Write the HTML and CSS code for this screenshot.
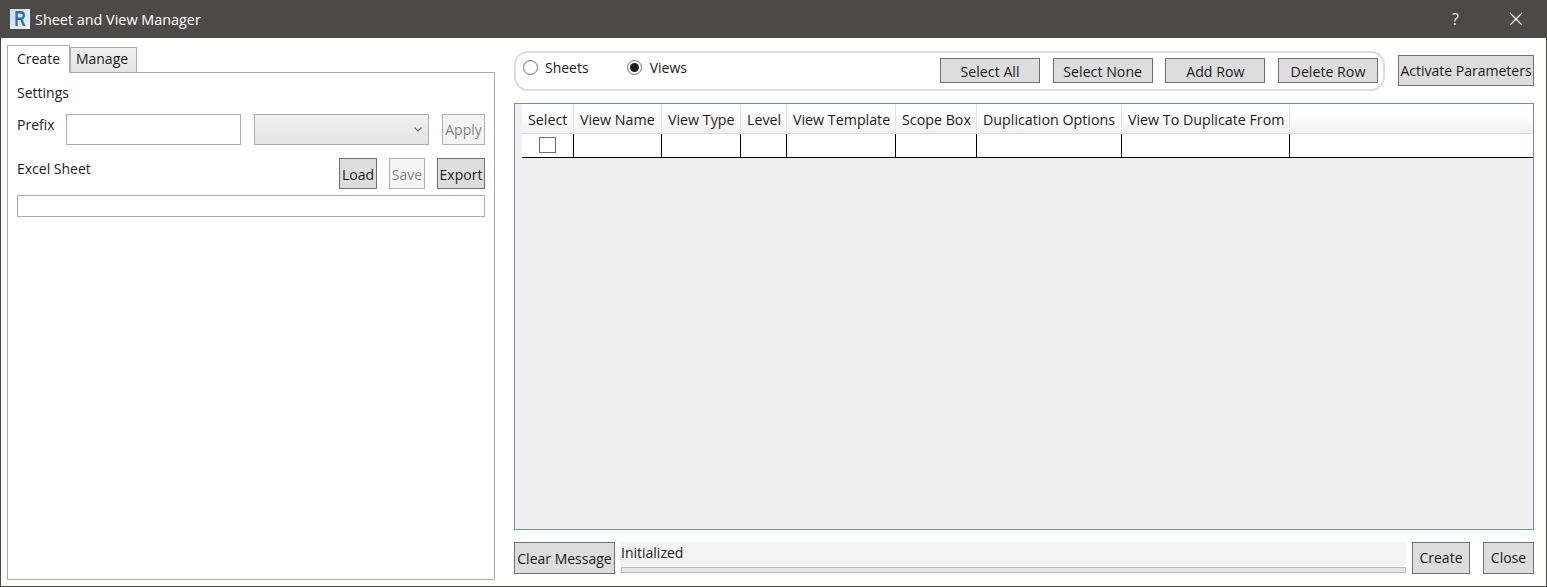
FILE: index.html
```html
<!DOCTYPE html>
<html lang="en">
<head>
<meta charset="utf-8">
<title>Sheet and View Manager</title>
<link rel="stylesheet" href="styles.css">
</head>
<body>
<div class="window">
  <header class="titlebar">
    <div class="logo"><span class="logo-r">R</span></div>
    <div class="title">Sheet and View Manager</div>
    <div class="help">?</div>
    <svg class="close-x" width="14" height="14" viewBox="0 0 14 14"><path d="M1 1 13 13M13 1 1 13" stroke="#fff" stroke-width="1.1" fill="none"/></svg>
  </header>
  <main class="content">
    <section class="left">
      <div class="tabs">
        <div class="tab active">Create</div>
        <div class="tab">Manage</div>
      </div>
      <div class="panel">
        <div class="settings">Settings</div>
        <div class="prefix-row">
          <span class="prefix-label">Prefix</span>
          <div class="input prefix-input"></div>
          <div class="combo">
            <svg width="8" height="5" viewBox="0 0 8 5"><path d="M.5.5 4 4 7.500.5" stroke="#666" stroke-width="1.200" fill="none"/></svg>
          </div>
          <button class="btn disabled apply">Apply</button>
        </div>
        <div class="excel-row">
          <span class="excel-label">Excel Sheet</span>
          <button class="btn small load">Load</button>
          <button class="btn small disabled save">Save</button>
          <button class="btn small export">Export</button>
        </div>
        <div class="input path-input"></div>
      </div>
    </section>
    <section class="right">
      <div class="top-row">
        <div class="group">
          <label class="radio"><span class="dot"></span>Sheets</label>
          <label class="radio views"><span class="dot on"></span>Views</label>
          <div class="group-btns">
            <button class="btn wide">Select All</button>
            <button class="btn wide">Select None</button>
            <button class="btn wide">Add Row</button>
            <button class="btn wide">Delete Row</button>
          </div>
        </div>
        <button class="btn activate">Activate Parameters</button>
      </div>
      <div class="grid">
        <div class="head">
          <div class="th c1">Select</div>
          <div class="th c2">View Name</div>
          <div class="th c3">View Type</div>
          <div class="th c4">Level</div>
          <div class="th c5">View Template</div>
          <div class="th c6">Scope Box</div>
          <div class="th c7">Duplication Options</div>
          <div class="th c8">View To Duplicate From</div>
          <div class="th-fill"></div>
        </div>
        <div class="row">
          <div class="td c1"><span class="check"></span></div>
          <div class="td c2"></div>
          <div class="td c3"></div>
          <div class="td c4"></div>
          <div class="td c5"></div>
          <div class="td c6"></div>
          <div class="td c7"></div>
          <div class="td c8"></div>
          <div class="td-fill"></div>
        </div>
      </div>
      <div class="bottom-row">
        <button class="btn clear">Clear Message</button>
        <div class="status">
          <div class="status-text">Initialized</div>
          <div class="progress"></div>
        </div>
        <button class="btn foot create">Create</button>
        <button class="btn foot close">Close</button>
      </div>
    </section>
  </main>
</div>
</body>
</html>
```
FILE: styles.css
```css
* { box-sizing: border-box; }
html, body { margin: 0; height: 587px; overflow: hidden; }
body { font-family: "Open Sans", "Noto Sans", sans-serif; font-size: 14px; color: #1a1a1a; background: #fff; }
.window { width: 1547px; height: 587px; border: 1px solid #4b4a47; border-top: 0; display: flex; flex-direction: column; }
.titlebar { height: 38px; background: #4c4a48; color: #fff; display: flex; align-items: center; padding: 0 24px 0 10px; flex: none; margin: 0 -1px; }
.logo { width: 20px; height: 20px; background: linear-gradient(135deg, #c9dcf0, #eef4fa); display: flex; justify-content: center; }
.logo-r { display: block; color: #2f6fb8; font: bold 22px/20px "Liberation Sans", sans-serif; transform: scaleX(.72); }
.title { margin-left: 5px; font-size: 14.4px; flex: 1; }
.help { font-size: 16px; margin-right: 50px; color: #e6e6e6; line-height: 20px; }
.close-x { display: block; }
.content { flex: 1; display: flex; padding: 6px 12px 6px 6px; min-height: 0; }
.left { width: 488px; flex: none; display: flex; flex-direction: column; }
.tabs { display: flex; height: 28px; align-items: flex-end; }
.tab { height: 25px; width: 67px; border: 1px solid #acacac; border-bottom: 0; background: linear-gradient(#f0f0f0, #e5e5e5); text-align: center; line-height: 21px; padding-right: 3px; }
.tab.active { width: 63px; height: 28px; background: #fff; line-height: 25px; margin-bottom: -1px; position: relative; z-index: 1; padding-right: 0; }
.panel { flex: 1; border: 1px solid #acacac; padding: 10px 9px 0 9px; }
.settings { height: 19px; line-height: 19px; }
.prefix-row { display: flex; margin-top: 12px; height: 31px; }
.prefix-label { width: 49px; line-height: 22px; }
.input { border: 1px solid #acacac; background: #fff; }
.prefix-input { width: 175px; height: 31px; }
.combo { width: 175px; height: 31px; margin-left: 13px; border: 1px solid #acacac; background: linear-gradient(#f0f0f0, #e5e5e5); display: flex; align-items: center; justify-content: flex-end; padding: 0 6px 1px 0; }
.btn { font: inherit; color: #1a1a1a; background: #dddddd; border: 1px solid #707070; padding: 0; white-space: nowrap; display: block; }
.btn.disabled { background: #f4f4f4; border-color: #adb2b5; color: #838383; }
.apply { width: 43px; height: 31px; margin-left: 13px; }
.excel-row { display: flex; margin-top: 13px; height: 31px; }
.excel-label { flex: 1; line-height: 22px; }
.small { height: 31px; padding-top: 2px; }
.load { width: 38px; }
.save { width: 36px; margin-left: 12px; }
.export { width: 48px; margin-left: 12px; }
.path-input { height: 22px; margin-top: 6px; }
.right { margin-left: 19px; flex: 1; min-width: 0; display: flex; flex-direction: column; }
.top-row { display: flex; align-items: flex-start; height: 52px; margin-top: 7px; }
.group { width: 871px; height: 40px; border: 2px solid #dddddd; border-radius: 14px; display: flex; padding-left: 7px; flex: none; }
.radio { display: flex; align-items: flex-start; line-height: 30px; height: 30px; }
.views { margin-left: 38px; }
.views .dot { margin-right: 8px; }
.dot { width: 15px; height: 15px; border: 1px solid #707070; border-radius: 50%; margin: 7px 7px 0 0; background: #fff; display: flex; align-items: center; justify-content: center; }
.dot.on::after { content: ""; width: 9px; height: 9px; border-radius: 50%; background: #1a1a1a; }
.group-btns { margin-left: auto; display: flex; gap: 12.67px; margin-right: 5px; margin-top: 5px; }
.wide { width: 100px; height: 25px; padding-top: 2px; font-size: 14.2px; }
.activate { width: 136px; height: 31px; margin-left: 13px; margin-top: 4px; flex: none; }
.grid { height: 427px; border: 1px solid #6b8fb5; background: #efefef; padding-left: 7px; flex: none; }
.head, .row { display: flex; }
.head { height: 30px; background: linear-gradient(#fff 0, #fff 40%, #f0f0f0 100%); border-bottom: 1px solid #dcdcdc; font-size: 14.25px; }
.th { border-right: 1px solid #e4e4e4; line-height: 32px; padding-left: 6px; white-space: nowrap; overflow: hidden; }
.th-fill, .td-fill { flex: 1; }
.row { height: 24px; background: #fff; border-bottom: 1px solid #000; }
.td { border-right: 1px solid #000; display: flex; align-items: center; justify-content: center; }
.c1 { width: 52px; }
.c2 { width: 88px; }
.c3 { width: 79px; }
.c4 { width: 46px; }
.c5 { width: 109px; }
.c6 { width: 81px; }
.c7 { width: 145px; }
.c8 { width: 168px; }
.td-fill { border-right: 0; }
.check { width: 17px; height: 16px; border: 1px solid #707070; background: #fff; display: block; margin-bottom: 1px; }
.bottom-row { display: flex; margin-top: 12px; height: 32px; }
.clear { width: 101px; height: 32px; flex: none; }
.status { flex: 1; min-width: 0; margin-left: 5px; height: 32px; background: #f3f3f3; padding-left: 1px; }
.status-text { line-height: 21px; height: 25px; }
.progress { height: 6px; border: 1px solid #bcbcbc; background: #e6e6e6; }
.foot { height: 32px; flex: none; padding-bottom: 2px; }
.create { width: 58px; margin-left: 6px; }
.close { width: 51px; margin-left: 13px; }
```
